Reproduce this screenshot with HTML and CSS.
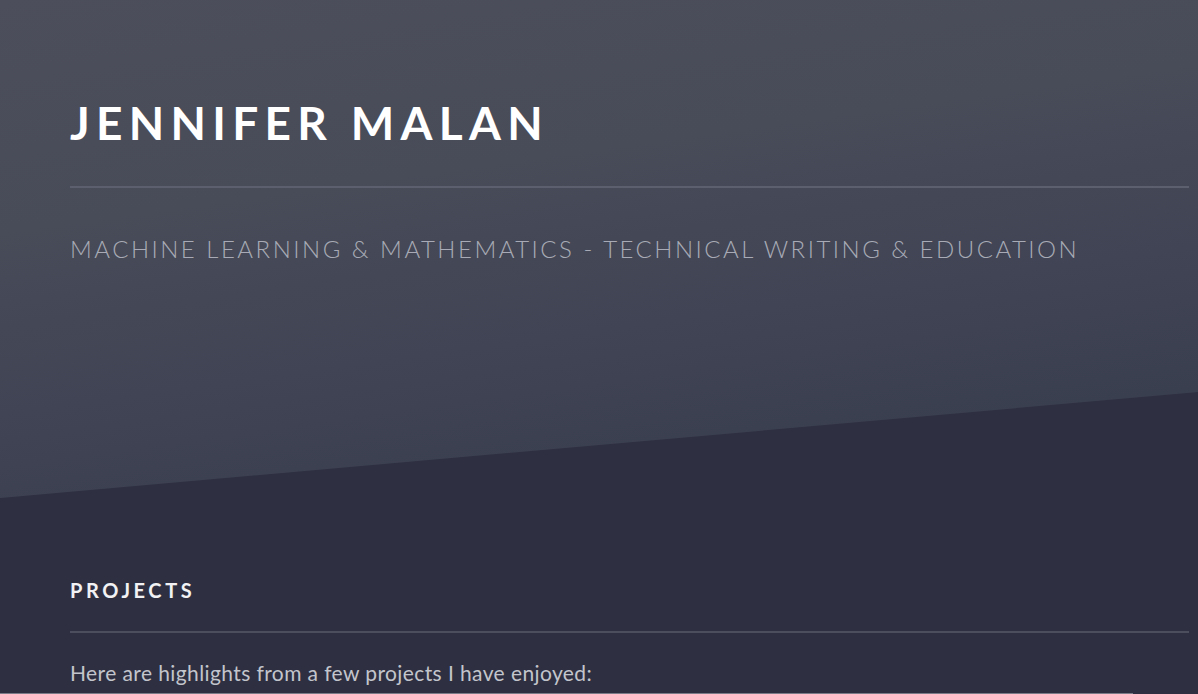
FILE: index.html
```html
<!DOCTYPE html>
<html lang="en">
<head>
<meta charset="utf-8">
<title>Jennifer Malan</title>
<link rel="stylesheet" href="styles.css">
</head>
<body>
<header class="hero">
  <div class="wrap">
    <h1 class="name">JENNIFER MALAN</h1>
    <hr class="rule">
    <p class="tagline">MACHINE LEARNING &amp; MATHEMATICS - TECHNICAL WRITING &amp; EDUCATION</p>
  </div>
</header>
<main>
  <section class="wrap projects">
    <h2 class="section-title">PROJECTS</h2>
    <hr class="rule">
    <p class="intro">Here are highlights from a few projects I have enjoyed:</p>
  </section>
  <div class="strip"></div>
</main>
</body>
</html>
```

FILE: styles.css
```css
html, body {
  margin: 0;
  padding: 0;
}

body {
  background: #2e3041;
  font-family: Lato, "Open Sans", sans-serif;
  overflow: hidden;
  height: 694px;
}

.wrap {
  padding: 0 9px 0 70px;
}

.hero {
  height: 498px;
  box-sizing: border-box;
  padding-top: 96px;
  background: linear-gradient(172deg, #4c4f5b 0%, #484b58 35%, #3e4253 70%, #353b4c 100%);
  clip-path: polygon(0 0, 100% 0, 100% 392px, 0 498px);
}

.name {
  margin: 0;
  font-size: 46px;
  line-height: 53px;
  font-weight: 700;
  letter-spacing: 6.3px;
  color: #ffffff;
}

.rule {
  margin: 0;
  border: 0;
  height: 2px;
  background: #5c5f6e;
}

.hero .rule {
  margin-top: 37px;
}

.tagline {
  margin: 47px 0 0;
  font-size: 24px;
  line-height: 28px;
  font-weight: 300;
  letter-spacing: 2.5px;
  color: #a8abb5;
}

.projects {
  padding-top: 80px;
}

.section-title {
  margin: 0;
  font-size: 20px;
  line-height: 24px;
  font-weight: 700;
  letter-spacing: 3.6px;
  color: #f2f2f4;
}

.projects .rule {
  margin-top: 29px;
  background: #4c4e5e;
}

.intro {
  margin: 26px 0 0;
  font-size: 21px;
  line-height: 28px;
  letter-spacing: 0.4px;
  color: #c3c5cc;
}

.strip {
  margin-top: 6px;
  width: 1133px;
  height: 4px;
  border-top: 1px solid #7a7c88;
  background: #2e3041;
}
```
